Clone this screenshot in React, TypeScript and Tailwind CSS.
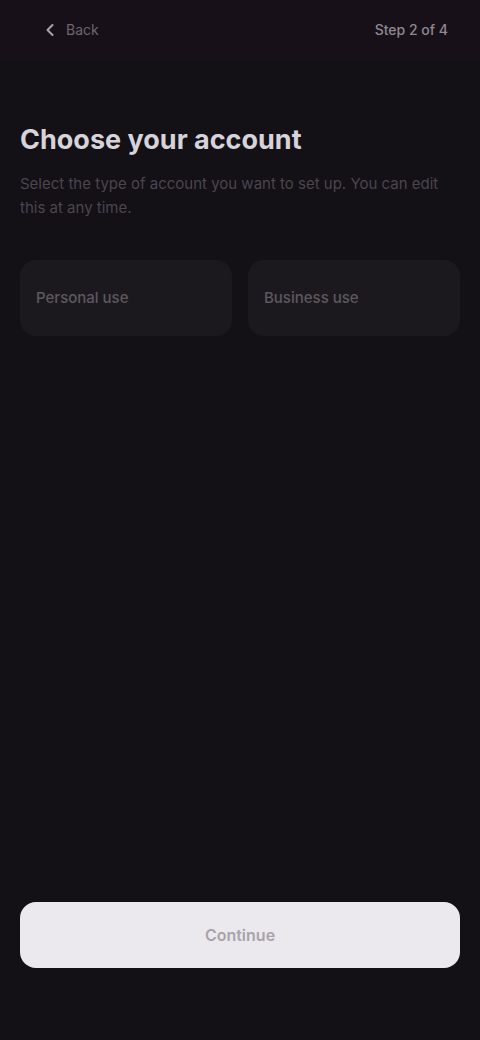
import { ChevronLeft } from "lucide-react";

export default function App() {
  return (
    <div
      className="flex min-h-[1040px] w-full flex-col bg-[#131016] text-white"
      style={{ fontFamily: "Inter, 'Liberation Sans', sans-serif" }}
    >
      {/* Header */}
      <header className="flex h-[60px] items-center justify-between bg-[#171019] px-5">
        <div className="flex items-center gap-1.5 pl-5 text-[#6d6570]">
          <ChevronLeft className="h-5 w-5 text-[#a9a1ab]" strokeWidth={2.5} />
          <span className="text-sm">Back</span>
        </div>
        <span className="pr-3 text-sm font-medium text-[#8f8893]">Step 2 of 4</span>
      </header>

      {/* Content */}
      <main className="flex flex-1 flex-col px-5 pt-[64px]">
        <h1 className="text-[27px] font-bold leading-8 text-[#d7d3da]">Choose your account</h1>
        <p className="mt-4 text-[15px] leading-6 text-[#4b4550]">
          Select the type of account you want to set up. You can edit this
          at any time.
        </p>

        <div className="mt-10 grid grid-cols-2 gap-4">
          <button className="flex h-[76px] items-center rounded-2xl bg-[#1c191e] px-4 text-left text-[15px] font-medium text-[#5d5860]">
            Personal use
          </button>
          <button className="flex h-[76px] items-center rounded-2xl bg-[#1c191e] px-4 text-left text-[15px] font-medium text-[#5d5860]">
            Business use
          </button>
        </div>
      </main>

      {/* Footer */}
      <footer className="px-5 pb-[72px]">
        <button className="flex h-[66px] w-full items-center justify-center rounded-2xl bg-[#ebe8ee] text-base font-semibold text-[#a8a4ab]">
          Continue
        </button>
      </footer>
    </div>
  );
}
